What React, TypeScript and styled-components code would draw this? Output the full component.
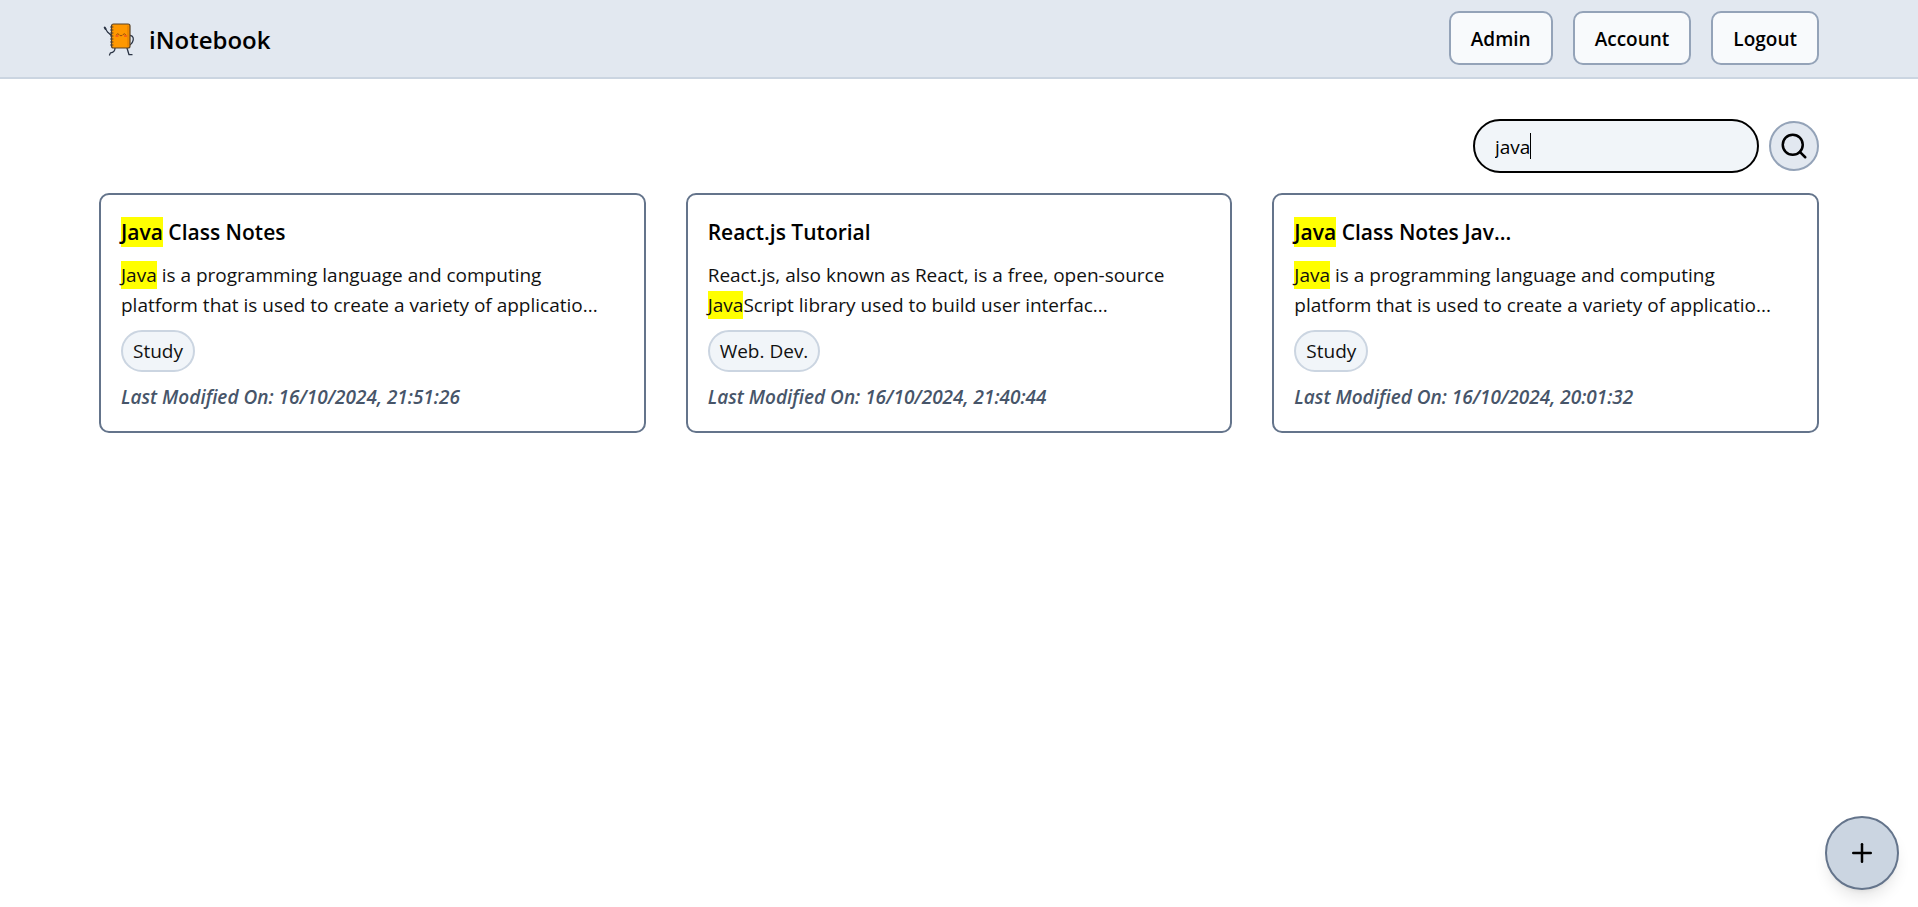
import React, { useState } from "react";
import styled, { createGlobalStyle } from "styled-components";
import { Plus, Search } from "lucide-react";

const GlobalStyle = createGlobalStyle`
  *, *::before, *::after { box-sizing: border-box; }
  body {
    margin: 0;
    background: #fff;
    color: #000;
    font-family: "Segoe UI", "Open Sans", "Noto Sans", sans-serif;
    font-size: 19px;
    line-height: 30px;
  }
  h1, h2, p { margin: 0; }
  button, input { font: inherit; color: inherit; }
`;

const Header = styled.header`
  display: flex;
  align-items: center;
  justify-content: space-between;
  padding: 11px 99px 12px;
  background: #e2e8f0;
  border-bottom: 2px solid #cbd5e1;
`;

const Brand = styled.a`
  display: flex;
  align-items: center;
  gap: 10px;
  color: inherit;
  text-decoration: none;
`;

const BrandName = styled.span`
  padding-top: 3px;
  font-size: 24px;
  font-weight: 600;
`;

const Nav = styled.nav`
  display: flex;
  gap: 20px;
`;

const NavButton = styled.button`
  height: 54px;
  padding: 2px 20px 0;
  border: 2px solid #94a3b8;
  border-radius: 10px;
  background: #f8fafc;
  font-weight: 600;
  cursor: pointer;
`;

const Main = styled.main`
  display: flex;
  flex-direction: column;
  gap: 20px;
  padding: 40px 99px;
`;

const SearchForm = styled.form`
  display: flex;
  align-items: center;
  justify-content: flex-end;
  gap: 10px;
`;

const SearchField = styled.div`
  position: relative;
  width: 286px;
`;

const SearchInput = styled.input`
  display: block;
  width: 100%;
  height: 54px;
  padding: 2px 20px 0;
  border: 2px solid #000;
  border-radius: 27px;
  outline: none;
  background: #f1f5f9;
  font-weight: 500;
  caret-color: transparent;
`;

const Caret = styled.span`
  position: absolute;
  top: 14px;
  left: 57px;
  width: 1px;
  height: 26px;
  background: #000;
`;

const SearchButton = styled.button`
  display: grid;
  place-items: center;
  width: 50px;
  height: 50px;
  padding: 0;
  border: 2px solid #94a3b8;
  border-radius: 50%;
  background: #e2e8f0;
  cursor: pointer;
`;

const Notes = styled.section`
  display: grid;
  grid-template-columns: repeat(3, 1fr);
  gap: 40px;
`;

const Card = styled.article`
  display: flex;
  flex-direction: column;
  align-items: flex-start;
  gap: 10px;
  padding: 20px 20px 19px;
  border: 2px solid #64748b;
  border-radius: 10px;
`;

const CardTitle = styled.h2`
  font-size: 21px;
  font-weight: 600;
  line-height: 35px;
`;

const CardText = styled.p`
  padding-right: 20px;
  color: #111;
`;

const Tag = styled.span`
  height: 42px;
  padding: 4px 10px;
  border: 2px solid #cbd5e1;
  border-radius: 21px;
  background: #f1f5f9;
  color: #111;
`;

const Modified = styled.p`
  color: #475569;
  font-style: italic;
  font-weight: 600;
`;

const Mark = styled.mark`
  padding: 1px 0;
  background: #ff0;
  color: inherit;
`;

const AddButton = styled.button`
  position: fixed;
  right: 19px;
  bottom: 17px;
  display: grid;
  place-items: center;
  width: 74px;
  height: 74px;
  padding: 0;
  border: 2px solid #64748b;
  border-radius: 50%;
  background: #cbd5e1;
  box-shadow: 0 10px 15px -3px rgb(0 0 0 / 0.1), 0 4px 6px -4px rgb(0 0 0 / 0.1);
  cursor: pointer;
`;

const Logo = () => (
  <svg width="40" height="40" viewBox="0 0 40 40" fill="none" strokeLinecap="round" strokeLinejoin="round" aria-hidden="true">
    <g stroke="#2b3445" strokeWidth="1.3">
      <path d="M12.500 17.500 L8.500 14 L6.300 10.500" />
      <path d="M5.700 9.500 L6.600 11" strokeWidth="2" />
      <path d="M31.500 17.500 C34.500 18 35 21 33.500 24 C32.800 26 31 27 30 27.500" />
      <path d="M16 30 C16 33 15 34.500 11.500 34.800 L10.500 37" />
      <path d="M28 30 L30 36.700 L33 36.700" />
    </g>
    <rect x="12.500" y="6" width="18.500" height="24" rx="2" fill="#ff9800" stroke="#5a4226" strokeWidth="1.200" />
    <path d="M29 8 V28" stroke="#e88300" strokeWidth="1.400" />
    <path d="M11.500 9 H14 M11.500 12 H14 M11.500 15 H14 M11.500 18 H14 M11.500 21 H14 M11.500 24 H14 M11.500 27 H14" stroke="#3f3a3a" strokeWidth="0.900" />
    <path d="M17.500 16.500 q1.300 -1.800 2.600 0 M24 16.500 q1.300 -1.800 2.600 0 M21 17.500 q1 1 2 0" stroke="#7a3a10" strokeWidth="0.800" />
    <path d="M17 18 h2 M25.500 18 h2" stroke="#f4511e" strokeWidth="1.300" />
  </svg>
);

type Note = { title: string; text: string; tag: string; modified: string };

const notes: Note[] = [
  {
    title: "Java Class Notes",
    text: "Java is a programming language and computing platform that is used to create a variety of applicatio...",
    tag: "Study",
    modified: "16/10/2024, 21:51:26",
  },
  {
    title: "React.js Tutorial",
    text: "React.js, also known as React, is a free, open-source JavaScript library used to build user interfac...",
    tag: "Web. Dev.",
    modified: "16/10/2024, 21:40:44",
  },
  {
    title: "Java Class Notes Jav...",
    text: "Java is a programming language and computing platform that is used to create a variety of applicatio...",
    tag: "Study",
    modified: "16/10/2024, 20:01:32",
  },
];

const Highlight = ({ text, query }: { text: string; query: string }) => {
  const at = query ? text.toLowerCase().indexOf(query.toLowerCase()) : -1;
  if (at < 0) return <>{text}</>;
  const end = at + query.length;
  return (
    <>
      {text.slice(0, at)}
      <Mark>{text.slice(at, end)}</Mark>
      {text.slice(end)}
    </>
  );
};

export default function App() {
  const [query, setQuery] = useState("java");
  const visible = notes.filter((n) =>
    `${n.title} ${n.text}`.toLowerCase().includes(query.toLowerCase())
  );
  return (
    <>
      <GlobalStyle />
      <Header>
        <Brand href="#">
          <Logo />
          <BrandName>iNotebook</BrandName>
        </Brand>
        <Nav>
          <NavButton type="button">Admin</NavButton>
          <NavButton type="button">Account</NavButton>
          <NavButton type="button">Logout</NavButton>
        </Nav>
      </Header>
      <Main>
        <SearchForm role="search" onSubmit={(e) => e.preventDefault()}>
          <SearchField>
            <SearchInput
              type="text"
              aria-label="Search notes"
              value={query}
              onChange={(e) => setQuery(e.target.value)}
            />
            {query === "java" && <Caret />}
          </SearchField>
          <SearchButton type="submit" aria-label="Search">
            <Search size={30} />
          </SearchButton>
        </SearchForm>
        <Notes>
          {visible.map((n) => (
            <Card key={n.modified}>
              <CardTitle>
                <Highlight text={n.title} query={query} />
              </CardTitle>
              <CardText>
                <Highlight text={n.text} query={query} />
              </CardText>
              <Tag>{n.tag}</Tag>
              <Modified>Last Modified On: {n.modified}</Modified>
            </Card>
          ))}
        </Notes>
      </Main>
      <AddButton type="button" aria-label="Add note">
        <Plus size={30} />
      </AddButton>
    </>
  );
}
